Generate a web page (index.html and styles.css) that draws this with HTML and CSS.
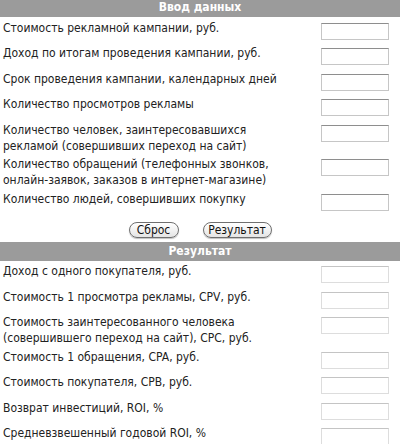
FILE: index.html
```html
<!DOCTYPE html>
<html>
<head>
<meta charset="utf-8">
<link rel="stylesheet" href="styles.css">
</head>
<body>
<div class="page">
  <div class="head">Ввод данных</div>
  <div class="rows">
    <div class="row"><div class="label">Стоимость рекламной кампании, руб.</div><input class="field" type="text"></div>
    <div class="row"><div class="label">Доход по итогам проведения кампании, руб.</div><input class="field" type="text"></div>
    <div class="row"><div class="label">Срок проведения кампании, календарных дней</div><input class="field" type="text"></div>
    <div class="row"><div class="label">Количество просмотров рекламы</div><input class="field" type="text"></div>
    <div class="row"><div class="label">Количество человек, заинтересовавшихся<br>рекламой (совершивших переход на сайт)</div><input class="field" type="text"></div>
    <div class="row"><div class="label">Количество обращений (телефонных звонков,<br>онлайн-заявок, заказов в интернет-магазине)</div><input class="field" type="text"></div>
    <div class="row"><div class="label">Количество людей, совершивших покупку</div><input class="field" type="text"></div>
  </div>
  <div class="buttons">
    <button class="btn btn-reset" type="button">Сброс</button>
    <button class="btn btn-calc" type="button">Результат</button>
  </div>
  <div class="head">Результат</div>
  <div class="rows">
    <div class="row"><div class="label">Доход с одного покупателя, руб.</div><input class="field out" type="text" readonly></div>
    <div class="row"><div class="label">Стоимость 1 просмотра рекламы, CPV, руб.</div><input class="field out" type="text" readonly></div>
    <div class="row"><div class="label">Стоимость заинтересованного человека<br>(совершившего переход на сайт), CPC, руб.</div><input class="field out" type="text" readonly></div>
    <div class="row"><div class="label">Стоимость 1 обращения, CPA, руб.</div><input class="field out" type="text" readonly></div>
    <div class="row"><div class="label">Стоимость покупателя, CPB, руб.</div><input class="field out" type="text" readonly></div>
    <div class="row"><div class="label">Возврат инвестиций, ROI, %</div><input class="field out" type="text" readonly></div>
    <div class="row"><div class="label">Средневзвешенный годовой ROI, %</div><input class="field out" type="text" readonly></div>
  </div>
</div>
</body>
</html>
```
FILE: styles.css
```css
html, body {
  margin: 0;
  padding: 0;
  background: #ffffff;
}
body {
  font-family: "DejaVu Sans Condensed", "DejaVu Sans", sans-serif;
  font-size: 12px;
  color: #222222;
  overflow: hidden;
}
.page {
  width: 400px;
  margin-top: -2px;
}
.head {
  height: 19px;
  line-height: 19px;
  background: #9b9b9b;
  color: #ffffff;
  font-weight: bold;
  text-align: center;
  font-size: 12px;
}
.rows {
  display: flex;
  flex-direction: column;
}
.row {
  display: flex;
  align-items: flex-start;
  padding-top: 2.5px;
}
.label {
  flex: 1;
  padding-left: 3px;
  line-height: 16px;
}
.field {
  box-sizing: border-box;
  width: 68px;
  height: 17px;
  margin: 3px 11px 3px 0;
  padding: 0;
  border: 1px solid #c6c6c6;
  border-top-color: #8e8e8e;
  background: #ffffff;
  outline: none;
  flex: none;
}
.field.out {
  border-color: #dddddd;
  border-top-color: #c4c4c4;
}
.buttons {
  display: flex;
  justify-content: center;
  gap: 24px;
  padding: 8px 0 4px 0;
}
.btn {
  box-sizing: border-box;
  height: 16px;
  padding: 0;
  border: 1px solid #6f6f6f;
  border-radius: 8px;
  background: linear-gradient(#ffffff, #f2f2f2 50%, #e4e4e4);
  box-shadow: 0 1px 1px rgba(0,0,0,0.25);
  font-family: "DejaVu Sans Condensed", "DejaVu Sans", sans-serif;
  font-size: 12px;
  line-height: 14px;
  color: #111111;
}
.btn-reset {
  width: 50px;
}
.btn-calc {
  width: 69px;
}
```
